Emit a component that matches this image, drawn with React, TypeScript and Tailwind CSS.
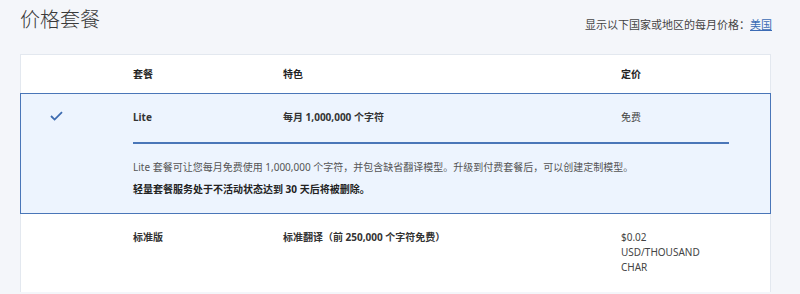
import React from "react";

const font = {
  fontFamily:
    '"Noto Sans", "Noto Sans CJK SC", sans-serif',
};

export default function App() {
  return (
    <div
      className="w-[800px] h-[294px] bg-[#f4f6fa] overflow-hidden text-[#333]"
      style={font}
    >
      <div className="flex items-end justify-between pl-[20px] pr-[28px] pt-[6px] h-[54px]">
        <h1 className="text-[20px] leading-[28px] font-light text-[#3a3a3a] self-start">
          价格套餐
        </h1>
        <div className="text-[11px] leading-[14px] text-[#444] mb-[22px]">
          显示以下国家或地区的每月价格：
          <a className="text-[#3b6bb5] underline">美国</a>
        </div>
      </div>

      <div className="ml-[20px] w-[751px] bg-white border border-[#e3e8ef] border-b-0 h-[238px]">
        {/* header */}
        <div className="grid grid-cols-[112px_150px_338px_1fr] h-[38px] items-center text-[10px] font-bold text-[#222]">
          <div />
          <div>套餐</div>
          <div>特色</div>
          <div>定价</div>
        </div>

        {/* selected row */}
        <div className="-mx-px border border-[#4a76b8] bg-[#edf4fe] h-[121px]">
          <div className="grid grid-cols-[112px_150px_338px_1fr] pt-[16px] h-[48px] items-start">
            <div className="flex justify-start pl-[29px] pt-[1px]">
              <svg width="13" height="10" viewBox="0 0 13 10">
                <path
                  d="M1 5 L4.6 8.6 L12 1.2"
                  fill="none"
                  stroke="#3d6bb0"
                  strokeWidth="1.8"
                />
              </svg>
            </div>
            <div className="text-[10px] font-bold text-[#333] leading-[14px]">Lite</div>
            <div className="text-[10px] font-bold text-[#333] leading-[14px]">
              每月 1,000,000 个字符
            </div>
            <div className="text-[10px] text-[#444] leading-[14px]">免费</div>
          </div>
          <div className="ml-[112px] w-[596px] h-[2px] bg-[#4a76b8]" />
          <div className="ml-[112px] pt-[16px] text-[10px] leading-[14px] text-[#555]">
            Lite 套餐可让您每月免费使用 1,000,000 个字符，并包含缺省翻译模型。升级到付费套餐后，可以创建定制模型。
          </div>
          <div className="ml-[112px] pt-[8px] text-[10px] leading-[14px] font-bold text-[#222]">
            轻量套餐服务处于不活动状态达到 30 天后将被删除。
          </div>
        </div>

        {/* standard row */}
        <div className="grid grid-cols-[112px_150px_338px_1fr] pt-[16px] items-start text-[10px] leading-[15px]">
          <div />
          <div className="font-bold text-[#333]">标准版</div>
          <div className="font-bold text-[#333]">标准翻译（前 250,000 个字符免费）</div>
          <div className="text-[#444]">
            <div>$0.02</div>
            <div>USD/THOUSAND</div>
            <div>CHAR</div>
          </div>
        </div>
      </div>
    </div>
  );
}
